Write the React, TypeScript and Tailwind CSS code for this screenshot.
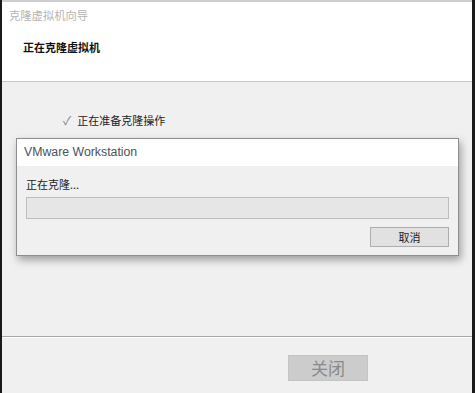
import React from 'react';

const font = { fontFamily: '"Noto Sans CJK SC", "Liberation Sans", sans-serif' };

export default function App() {
    return (
        <div className="w-[475px] h-[393px] flex bg-[#1a1a1a] overflow-hidden" style={font}>
            <div className="w-[2px] shrink-0" />
            <div className="w-[470px] flex flex-col bg-[#f0f0f0]">
                {/* Header */}
                <div className="h-[2px] bg-[#cfcfcf]" />
                <div className="h-[80px] bg-white border-b border-[#c8c8c8] flex flex-col">
                    <div className="pl-[7px] pt-[4px] text-[11.3px] leading-[18px] text-[#b4b4b4]">克隆虚拟机向导</div>
                    <div className="pl-[21px] pt-[15px] text-[11px] leading-[16px] font-bold text-[#111]">正在克隆虚拟机</div>
                </div>

                {/* Content */}
                <div className="h-[254px] flex flex-col">
                    <div className="pl-[61px] pt-[29px] flex items-center gap-[6px] text-[11px] leading-[18px] text-[#222]">
                        <span className="text-[#888] text-[12px]">✓</span>
                        <span>正在准备克隆操作</span>
                    </div>

                    {/* Progress dialog */}
                    <div className="ml-[14px] mt-[9px] w-[443px] h-[118px] border border-[#8e8e8e] bg-[#f0f0f0] shadow-[2px_4px_8px_rgba(0,0,0,0.35)] flex flex-col">
                        <div className="h-[27px] bg-white flex items-center pl-[7px] text-[12.3px] text-[#4b5260]" style={{ fontFamily: '"Liberation Sans", "Noto Sans CJK SC", sans-serif' }}>
                            VMware Workstation
                        </div>
                        <div className="flex flex-col px-[9px] pt-[9px]">
                            <div className="text-[11px] leading-[18px] text-[#222]">正在克隆...</div>
                            <div className="mt-[4px] h-[22px] bg-[#e6e6e6] border border-[#bdbdbd]" />
                            <div className="mt-[8px] flex justify-end">
                                <button className="w-[79px] h-[20px] bg-[#e1e1e1] border border-[#adadad] text-[11px] leading-[18px] text-[#222]">
                                    取消
                                </button>
                            </div>
                        </div>
                    </div>
                </div>

                {/* Footer */}
                <div className="h-[2px] border-t border-[#a8a8a8] border-b border-b-white" />
                <div className="flex-1 pt-[17px] pl-[286px]">
                    <button className="w-[80px] h-[26px] bg-[#cccccc] border border-[#c4c4c4] text-[17px] leading-[24px] text-[#8a8a8a]">
                        关闭
                    </button>
                </div>
            </div>
            <div className="w-[3px] shrink-0" />
        </div>
    );
}
